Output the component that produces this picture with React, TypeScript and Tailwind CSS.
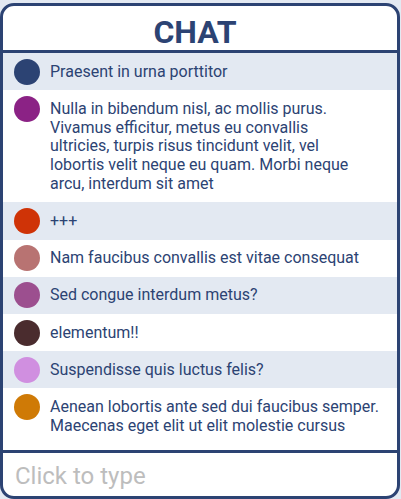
import React from 'react';

interface Message {
  color: string;
  text: string;
}

const messages: Message[] = [
  { color: '#2c4373', text: 'Praesent in urna porttitor' },
  {
    color: '#8b2285',
    text: 'Nulla in bibendum nisl, ac mollis purus.\nVivamus efficitur, metus eu convallis\nultricies, turpis risus tincidunt velit, vel\nlobortis velit neque eu quam. Morbi neque\narcu, interdum sit amet',
  },
  { color: '#cf3307', text: '+++' },
  { color: '#b87372', text: 'Nam faucibus convallis est vitae consequat' },
  { color: '#9c4f8f', text: 'Sed congue interdum metus?' },
  { color: '#4a2c2e', text: 'elementum!!' },
  { color: '#d08fe0', text: 'Suspendisse quis luctus felis?' },
  { color: '#cf7a06', text: 'Aenean lobortis ante sed dui faucibus semper.\nMaecenas eget elit ut elit molestie cursus' },
];

const MessageRow = ({ color, text, idx }: Message & { idx: number }) => {
  return (
    <div
      className={`flex items-start gap-[10px] pl-[11px] pr-[12px] py-[5.6px] ${
        idx % 2 === 0 ? 'bg-[#e3e9f2]' : 'bg-white'
      }`}
    >
      <div className="w-[26px] h-[26px] rounded-full shrink-0" style={{ backgroundColor: color }} />
      <p className="flex-1 whitespace-pre-line text-[16px] leading-[18.75px] pt-[4px] pb-[3.25px] text-[#2c4373]">
        {text}
      </p>
    </div>
  );
};

const App = () => {
  return (
    <div className="w-[401px] h-[499px] bg-[#e3e9f2] font-['Roboto',sans-serif] overflow-hidden">
      <div className="w-[400px] h-[496px] mt-[3px] border-[3px] border-[#2c4373] rounded-[14px] overflow-hidden bg-white flex flex-col">
        <div className="h-[47px] shrink-0 border-b-[3px] border-[#2c4373] pt-[10px] pr-[10px] text-center">
          <h1 className="text-[32px] leading-[32px] font-bold text-[#2c4373]">CHAT</h1>
        </div>
        <div className="flex-1 overflow-hidden pb-[6px]">
          {messages.map((m, idx) => (
            <MessageRow key={idx} idx={idx} color={m.color} text={m.text} />
          ))}
        </div>
        <div className="h-[46px] shrink-0 border-t-[3px] border-[#2c4373] pt-[2px]">
          <input
            className="w-full h-full pl-[12px] text-[24px] text-[#2c4373] outline-none placeholder:text-[#bdbdbd]"
            placeholder="Click to type"
          />
        </div>
      </div>
    </div>
  );
};

export default App;
